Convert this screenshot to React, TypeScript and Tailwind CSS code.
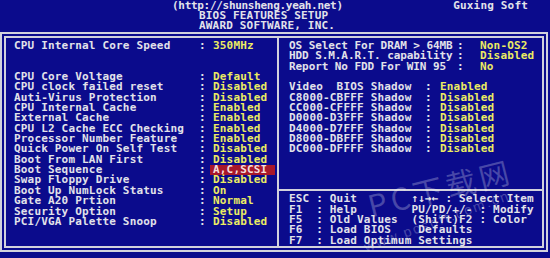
import * as React from "react";

const leftItems: [string, string][] = [
  ["CPU Core Voltage", "Default"],
  ["CPU clock failed reset", "Disabled"],
  ["Auti-Virus Protection", "Disabled"],
  ["CPU Internal Cache", "Enabled"],
  ["External Cache", "Enabled"],
  ["CPU L2 Cache ECC Checking", "Enabled"],
  ["Processor Number Feature", "Enabled"],
  ["Quick Power On Self Test", "Disabled"],
  ["Boot From LAN First", "Disabled"],
  ["Boot Sequence", "A,C,SCSI"],
  ["Swap Floppy Drive", "Disabled"],
  ["Boot Up NumLock Status", "On"],
  ["Gate A20 Prtion", "Normal"],
  ["Security Option", "Setup"],
  ["PCI/VGA Palette Snoop", "Disabled"],
];

const osItems: [string, string][] = [
  ["OS Select For DRAM > 64MB", "Non-OS2"],
  ["HDD S.M.A.R.T. capability", "Disabled"],
  ["Report No FDD For WIN 95", "No"],
];

const shadowItems: [string, string][] = [
  ["Video  BIOS Shadow", "Enabled"],
  ["C8000-CBFFF Shadow", "Disabled"],
  ["CC000-CFFFF Shadow", "Disabled"],
  ["D0000-D3FFF Shadow", "Disabled"],
  ["D4000-D7FFF Shadow", "Disabled"],
  ["D8000-DBFFF Shadow", "Disabled"],
  ["DC000-DFFFF Shadow", "Disabled"],
];

const help = [
  "ESC : Quit        ↑↓→← : Select Item",
  "F1  : Help        PU/PD/+/- : Modify",
  "F5  : Old Values  (Shift)F2 : Color",
  "F6  : Load BIOS    Defaults",
  "F7  : Load Optimum Settings",
];

const line = "h-[10.35px] leading-[10.35px] whitespace-pre";

export default function App() {
  return (
    <div className="relative w-[550px] h-[258px] overflow-hidden bg-[#0b0b8c] text-[#e2e2ea] font-['DejaVu_Sans_Mono',monospace] font-bold text-[11px] tracking-[0.18px]">
      <div className="h-[32px] pt-[0.5px]">
        <div className={`flex ${line}`}>
          <span className="pl-[172px] tracking-[-0.3px]">(http://shunsheng.yeah.net)</span>
          <span className="ml-auto pr-[22px]">Guxing Soft</span>
        </div>
        <div className={`pl-[199px] ${line}`}>BIOS FEATURES SETUP</div>
        <div className={`pl-[199px] ${line}`}>AWARD SOFTWARE, INC.</div>
      </div>

      <div className="w-[548px] h-[220px] border-2 border-[#d2d2dc] p-[2px]">
        <div className="flex h-full border-2 border-[#d2d2dc]">
          {/* left column */}
          <div className="w-[271px] shrink-0 pl-[8px] pt-[3px]">
            <div className={`grid grid-cols-[185px_14px_1fr] ${line}`}>
              <span>CPU Internal Core Speed</span>
              <span>:</span>
              <span className="text-[#ecec62]">350MHz</span>
            </div>
            <div className="h-[20.7px]" />
            {leftItems.map(([k, v]) => (
              <div key={k} className={`grid grid-cols-[185px_14px_1fr] ${line}`}>
                <span>{k}</span>
                <span>:</span>
                {v === "A,C,SCSI" ? (
                  <span className="-ml-[3px] mr-[2px] pl-[3px] bg-[#a8182a] text-[#f4dede]">{v}</span>
                ) : (
                  <span className="text-[#ecec62]">{v}</span>
                )}
              </div>
            ))}
          </div>

          <div className="w-[2px] shrink-0 bg-[#d2d2dc]" />

          {/* right column */}
          <div className="flex flex-1 flex-col">
            <div className="h-[152px] pl-[10px] pt-[3px]">
              {osItems.map(([k, v]) => (
                <div key={k} className={`grid grid-cols-[168px_23px_1fr] ${line}`}>
                  <span className="tracking-[-0.08px]">{k}</span>
                  <span>:</span>
                  <span className="text-[#ecec62]">{v}</span>
                </div>
              ))}
              <div className="h-[10.35px]" />
              {shadowItems.map(([k, v]) => (
                <div key={k} className={`grid grid-cols-[136px_15px_1fr] ${line}`}>
                  <span>{k}</span>
                  <span>:</span>
                  <span className="text-[#ecec62]">{v}</span>
                </div>
              ))}
            </div>
            <div className="h-[2px] bg-[#d2d2dc]" />
            <div className="pl-[10px] pt-[3.5px]">
              {help.map((h) => (
                <div key={h} className={line}>
                  {h}
                </div>
              ))}
            </div>
          </div>
        </div>
      </div>

      {/* watermark */}
      <div className="pointer-events-none absolute left-[366px] top-[172px] -rotate-[14deg] text-[30px] leading-none tracking-[4px] text-white/25 font-['Noto_Sans_CJK_SC',sans-serif] font-normal">
        PC下载网
      </div>
      <div className="pointer-events-none absolute left-[360px] top-[214px] -rotate-[20deg] text-[14px] leading-none tracking-[2px] text-white/25 font-['Liberation_Sans',sans-serif] font-normal">
        www.pcsoft.com.cn
      </div>
    </div>
  );
}
